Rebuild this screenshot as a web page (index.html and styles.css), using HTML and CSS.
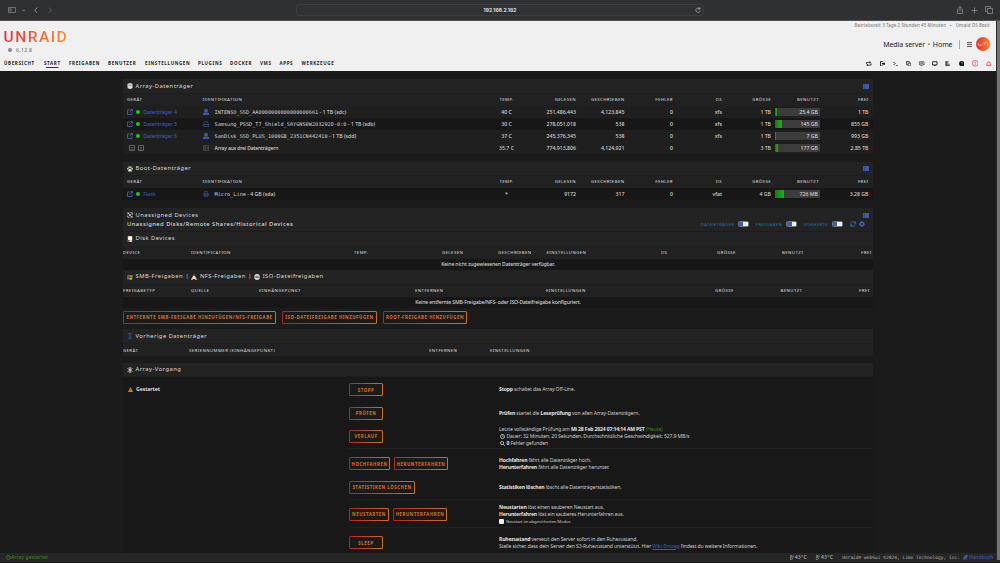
FILE: index.html
```
<!DOCTYPE html>
<html lang="de">
<head>
<meta charset="utf-8">
<title>Media server</title>
<link rel="stylesheet" href="styles.css">
</head>
<body>
<svg class="defs" aria-hidden="true">
  <defs>
    <symbol id="ext" viewBox="0 0 12 12"><path d="M6 2H1v9h9V7M7 1h4v4M11 1L5 7" fill="none" stroke="currentColor" stroke-width="1.900"/></symbol>
    <symbol id="list" viewBox="0 0 12 10"><path d="M0 0h12v10H0z" fill="#3a5ab0"/><path d="M3 0v10" stroke="#26396f" stroke-width=".8"/></symbol>
    <symbol id="drive" viewBox="0 0 12 12"><path d="M3 0h6l1 7H2zM0 8h12v4H0z" fill="currentColor"/></symbol>
    <symbol id="hdd" viewBox="0 0 12 12"><path d="M1 7l2-6h6l2 6v4H1zM1 7h10" fill="none" stroke="currentColor" stroke-width="1.700"/></symbol>
    <symbol id="usb" viewBox="0 0 12 12"><path d="M3 5V1h6v4M1 5h10v4H1zM3 9v2h6V9M1 7h10" fill="none" stroke="currentColor" stroke-width="1.500"/></symbol>
    <symbol id="rack" viewBox="0 0 12 12"><path d="M1 1h10v10H1zM1 4.300h10M1 7.600h10M4 1v10" fill="none" stroke="currentColor" stroke-width="1.300"/></symbol>
    <symbol id="box" viewBox="0 0 12 12"><path d="M1 1h10v10H1z" fill="none" stroke="currentColor" stroke-width="1.600"/><path d="M4 4l2 2 2-2M4 8h4" fill="none" stroke="currentColor" stroke-width="1.400"/></symbol>
    <symbol id="db" viewBox="0 0 12 12"><path d="M1 2.500C1 0 11 0 11 2.500v7C11 12.500 1 12.500 1 9.500z" fill="currentColor"/><path d="M1 3.500c1 1.500 9 1.500 10 0" fill="none" stroke="#555"/></symbol>
    <symbol id="paw" viewBox="0 0 12 12"><g fill="currentColor"><ellipse cx="1.800" cy="5.400" rx="1.500" ry="1.900"/><ellipse cx="4.300" cy="2.400" rx="1.500" ry="2"/><ellipse cx="7.700" cy="2.400" rx="1.500" ry="2"/><ellipse cx="10.200" cy="5.400" rx="1.500" ry="1.900"/><path d="M6 5.400c2 0 3.800 2.600 3.800 4.400 0 2-2.200 1.300-3.800 1.300s-3.800.7-3.800-1.300C2.200 8 4 5.400 6 5.400z"/></g></symbol>
    <symbol id="plug" viewBox="0 0 12 12"><path d="M1 1l10 10M2 5V2h3M7 1.500h3.500V6M1.500 7v3.500H5M7 10h3V8M4 6l2 2M6.500 4L8 5.500" fill="none" stroke="currentColor" stroke-width="1.500"/></symbol>
    <symbol id="disk" viewBox="0 0 12 12"><path d="M1.500 0h9v12h-9z" fill="#c9bd9c"/><circle cx="6.300" cy="5" r="4" fill="#fff"/><path d="M2 8l4 1-3 3H1.500z" fill="#5a4630"/></symbol>
    <symbol id="win" viewBox="0 0 12 12"><path d="M1 2q2.500-1.500 5 0L5 6Q3 5 0 6z" fill="#d8472a"/><path d="M6.500 2q2.500 1 5.500 0l-1 4q-3 1-5.500 0z" fill="#76a82c"/><path d="M0 7q2.500-1 5 0l-1 4q-2-1-4 0z" fill="#4181c9"/><path d="M5.500 7q2.500 1 5.500 0l-1 4q-3 1-5.500 0z" fill="#e5b52b"/></symbol>
    <symbol id="tux" viewBox="0 0 12 12"><ellipse cx="6" cy="3" rx="2" ry="3" fill="#57534c"/><path d="M4 4h4l3 6H1z" fill="#eee6d2"/><path d="M0 9h4v3H0zM8 9h4v3H8zM4.500 3h3L6 4.500z" fill="#dd9a24"/></symbol>
    <symbol id="cd" viewBox="0 0 12 12"><circle cx="6" cy="6" r="5.800" fill="#d5d5d5"/><path d="M6 6L1 3a6 6 0 0 0 0 5zM6 6l5 3a6 6 0 0 0 0-5z" fill="#888"/><circle cx="6" cy="6" r="1.700" fill="#2c2c2c"/></symbol>
    <symbol id="hour" viewBox="0 0 12 12"><path d="M3 1h6M3 11h6M4 1v2l4 6v2M8 1v2L4 9v2" fill="none" stroke="#2b5e9b" stroke-width="1.500"/></symbol>
    <symbol id="snow" viewBox="0 0 12 12"><path d="M6 0v12M1 3l10 6M11 3L1 9M4 1l2 2 2-2M4 11l2-2 2 2" fill="none" stroke="currentColor" stroke-width="1.500"/></symbol>
    <symbol id="warn" viewBox="0 0 12 12"><path d="M6 0l6 12H0z" fill="#d6820c"/><path d="M6 4v4M6 9v1.500" stroke="#8a4a00" stroke-width="1.200"/></symbol>
    <symbol id="clock" viewBox="0 0 12 12"><circle cx="6" cy="6" r="4.800" fill="none" stroke="currentColor" stroke-width="2"/><path d="M6 3v3h2" fill="none" stroke="currentColor" stroke-width="1.400"/></symbol>
    <symbol id="search" viewBox="0 0 12 12"><circle cx="5" cy="5" r="3.800" fill="none" stroke="currentColor" stroke-width="2"/><path d="M8 8l3.500 3.500" stroke="currentColor" stroke-width="2.200"/></symbol>
    <symbol id="sync" viewBox="0 0 12 12"><path d="M1.500 5a4.600 4.600 0 0 1 8.500-1.500M10.500 7A4.600 4.600 0 0 1 2 8.500M11 1v3.500H7.500M1 11V7.500h3.500" fill="none" stroke="currentColor" stroke-width="1.900"/></symbol>
    <symbol id="gear" viewBox="0 0 12 12"><circle cx="6" cy="6" r="3.300" fill="none" stroke="currentColor" stroke-width="2.800"/><path d="M6 0v2M6 10v2M0 6h2M10 6h2M2 2l1 1M9 9l1 1M10 2L9 3M3 9l-1 1" stroke="currentColor" stroke-width="2.200"/></symbol>
    <symbol id="temp" viewBox="0 0 12 12"><path d="M4 7V2a1.500 1.500 0 0 1 3 0v5a2.500 2.500 0 1 1-3 0zM9 2h2M9 4.500h2" fill="none" stroke="currentColor" stroke-width="1.600"/></symbol>
    <symbol id="book" viewBox="0 0 12 12"><path d="M4 0h8l-3 9H2q-1 1 0 1.500h7V12H2Q-1 11 .5 8z" fill="currentColor"/></symbol>
  </defs>
</svg>

<div class="chrome">
  <div class="chrome-left">
    <svg class="c-side" viewBox="0 0 16 12"><path d="M1 1h14v10H1zM6 1v10M2.500 3.500H4.500M2.500 5.500H4.500M2.500 7.500H4.500" fill="none" stroke="#929395" stroke-width="1.300"/></svg>
    <svg class="c-down" viewBox="0 0 8 6"><path d="M1 1l3 3 3-3" fill="none" stroke="#aaa" stroke-width="1.800"/></svg>
    <svg class="c-back" viewBox="0 0 6 10"><path d="M5 1L1 5l4 4" fill="none" stroke="#aaa" stroke-width="1.300"/></svg>
    <svg class="c-back" viewBox="0 0 6 10"><path d="M1 1l4 4-4 4" fill="none" stroke="#606163" stroke-width="1.300"/></svg>
  </div>
  <div class="address"><span>192.168.2.162</span>
    <svg viewBox="0 0 12 12"><path d="M9.500 3.500A4.400 4.400 0 1 0 10.500 7M6.500 4h3.500V.5" fill="none" stroke="#b5b5b5" stroke-width="1.500"/></svg>
  </div>
  <div class="chrome-right">
    <svg viewBox="0 0 14 16"><path d="M4.500 6H2v9h10V6H9.500M7 11V1M4 4l3-3 3 3" fill="none" stroke="#929395" stroke-width="1.500"/></svg>
    <svg viewBox="0 0 14 14"><path d="M7 1v12M1 7h12" fill="none" stroke="#929395" stroke-width="1.500"/></svg>
    <svg viewBox="0 0 16 16"><path d="M4 11H1V1h10v3M5 5h10v10H5z" fill="none" stroke="#929395" stroke-width="1.500"/></svg>
  </div>
</div>

<header class="header">
  <div class="brand">
    <div class="logo">UNRAID</div>
    <div class="version"><i></i>6.12.8</div>
  </div>
  <div class="server">
    <div class="uptime"><span>Betriebszeit 3 Tage 2 Stunden 45 Minuten</span><b>•</b><span>Unraid OS <em>Basic</em></span></div>
    <div class="name"><span>Media server</span><b>•</b><span>Home</span><i class="bar"></i><i class="burger"></i>
      <svg class="avatar" viewBox="0 0 14 14"><defs><linearGradient id="g"><stop stop-color="#e2302b"/><stop offset="1" stop-color="#ff8229"/></linearGradient></defs><circle cx="7" cy="7" r="7" fill="url(#g)"/><path d="M2.200 6v1q0 1.600 1.400 1.600T5 7M6.300 8.800V8M7.300 6.500V5.500M8.600 8V6.500q0-1.400 1.400-1.400T11.500 6.500V9" fill="none" stroke="#f6d6c8" stroke-width=".8"/></svg>
    </div>
  </div>
  <nav class="nav">
    <a>ÜBERSICHT</a><a class="active">START</a><a>FREIGABEN</a><a>BENUTZER</a><a>EINSTELLUNGEN</a><a>PLUGINS</a><a>DOCKER</a><a>VMS</a><a>APPS</a><a>WERKZEUGE</a>
  </nav>
  <div class="tools">
    <svg viewBox="0 0 12 12"><path d="M1 7V3h9M11 5v4H2M7.500 1.500L10 3 7.500 5M4.500 7L2 9l2.500 2" fill="none" stroke="#222" stroke-width="1.800"/></svg>
    <svg viewBox="0 0 12 12"><path d="M6 1H1v10h5" fill="none" stroke="#222" stroke-width="2"/><path d="M4 4.500h4V2l4 4-4 4V7.500H4z" fill="#222"/></svg>
    <svg viewBox="0 0 12 12"><path d="M1 2l3.500 3.500L1 9M6 10.500h6" fill="none" stroke="#222" stroke-width="2"/></svg>
    <svg viewBox="0 0 12 12"><path d="M4 8H1V1h6v3M4.500 4.500h6v6.500h-6z" fill="none" stroke="#222" stroke-width="1.700"/></svg>
    <svg viewBox="0 0 12 12"><path d="M1 1.500h10v7H7l-2 2v-2H1zM3 4h6M3 6h6" fill="none" stroke="#222" stroke-width="1.300"/></svg>
    <svg viewBox="0 0 12 12"><path d="M1 1.500h10v7H1z" fill="none" stroke="#222" stroke-width="2"/><path d="M4 9h4v2.500H4z" fill="#222"/></svg>
    <svg viewBox="0 0 12 12"><path d="M2 0v12M2 2h6M2 4.500h4M2 7h8M2 10h9" fill="none" stroke="#222" stroke-width="1.800"/></svg>
    <svg viewBox="0 0 12 12"><circle cx="6" cy="6" r="5.800" fill="#111"/><path d="M4.300 4.500q0-1.700 1.700-1.700t1.700 1.500Q7.700 5.500 6 6.500M6 8v1.500" fill="none" stroke="#ddd" stroke-width="1"/></svg>
    <svg class="big" viewBox="0 0 12 12"><circle cx="6" cy="6" r="5.300" fill="none" stroke="#e2415c" stroke-width="1.400"/><path d="M6 3v3.500M6 7.500V9" stroke="#e2415c" stroke-width="1.600"/></svg>
    <svg viewBox="0 0 12 12"><path d="M1 9.500q1.500-1 1.500-4Q2.500 2 6 2t3.500 3.500q0 3 1.500 4z" fill="none" stroke="#ff4a22" stroke-width="2"/><path d="M5 11h2" stroke="#ff4a22" stroke-width="1.800"/></svg>
  </div>
</header>
<div class="scrollbar"></div>

<main class="content">
  <section class="array">
    <h2><svg><use href="#db"/></svg><span>Array-Datenträger</span><svg class="view"><use href="#list"/></svg></h2>
    <div class="row head"><span>GERÄT</span><span>IDENTIFIKATION</span><span>TEMP.</span><span>GELESEN</span><span>GESCHRIEBEN</span><span>FEHLER</span><span>DS</span><span>GRÖSSE</span><span>BENUTZT</span><span>FREI</span></div>
    <div class="row"><span class="dev"><svg><use href="#ext"/></svg><i></i>Datenträger 4</span><span class="id"><svg class="blue"><use href="#drive"/></svg><tt>INTENSO_SSD_AA0000000000000000661</tt> - 1 TB (sdc)</span><span>40 C</span><span>251,486,443</span><span>4,123,845</span><span>0</span><span>xfs</span><span>1 TB</span><span class="use"><i style="width:4%"></i>25.4 GB</span><span>1 TB</span></div>
    <div class="row dark"><span class="dev"><svg><use href="#ext"/></svg><i></i>Datenträger 5</span><span class="id"><svg class="navy"><use href="#hdd"/></svg><tt>Samsung_PSSD_T7_Shield_S6YGNS0W203292D-0:0</tt> - 1 TB (sdb)</span><span>30 C</span><span>278,051,018</span><span>538</span><span>0</span><span>xfs</span><span>1 TB</span><span class="use"><i style="width:15%"></i>145 GB</span><span>855 GB</span></div>
    <div class="row"><span class="dev"><svg><use href="#ext"/></svg><i></i>Datenträger 6</span><span class="id"><svg class="blue"><use href="#drive"/></svg><tt>SanDisk_SSD_PLUS_1000GB_2351CN442410</tt> - 1 TB (sdd)</span><span>37 C</span><span>245,376,345</span><span>538</span><span>0</span><span>xfs</span><span>1 TB</span><span class="use"><i style="width:2%"></i>7 GB</span><span>993 GB</span></div>
    <div class="row total"><span class="dev grey"><svg><use href="#box"/></svg><svg><use href="#box"/></svg></span><span class="id"><svg class="grey"><use href="#rack"/></svg>Array aus drei Datenträgern</span><span>35.7 C</span><span>774,913,806</span><span>4,124,921</span><span>0</span><span></span><span>3 TB</span><span class="use"><i style="width:6.500%"></i>177 GB</span><span>2.85 TB</span></div>
  </section>

  <section class="boot">
    <h2><svg><use href="#paw"/></svg><span>Boot-Datenträger</span><svg class="view"><use href="#list"/></svg></h2>
    <div class="row head"><span>GERÄT</span><span>IDENTIFIKATION</span><span>TEMP.</span><span>GELESEN</span><span>GESCHRIEBEN</span><span>FEHLER</span><span>DS</span><span>GRÖSSE</span><span>BENUTZT</span><span>FREI</span></div>
    <div class="row dark"><span class="dev"><svg><use href="#ext"/></svg><i></i>Flash</span><span class="id"><svg class="navy"><use href="#usb"/></svg><tt>Micro_Line</tt> - 4 GB (sda)</span><span>*</span><span>9172</span><span>317</span><span>0</span><span>vfat</span><span>4 GB</span><span class="use"><i style="width:19%"></i>726 MB</span><span>3.28 GB</span></div>
  </section>

  <section class="unassigned">
    <div class="ud-title">
      <h2><svg><use href="#plug"/></svg><span>Unassigned Devices</span><svg class="view"><use href="#list"/></svg></h2>
      <div class="ud-sub"><span class="sub">Unassigned Disks/Remote Shares/Historical Devices</span>
        <div class="switches"><span>DATENTRÄGER</span><i></i><span>FREIGABEN</span><i></i><span>VORHERIG</span><i></i><svg><use href="#sync"/></svg><svg><use href="#gear"/></svg></div>
      </div>
    </div>
    <h2 class="split"><svg><use href="#disk"/></svg><span>Disk Devices</span></h2>
    <div class="heads disks"><span>DEVICE</span><span>IDENTIFICATION</span><span>TEMP.</span><span>GELESEN</span><span>GESCHRIEBEN</span><span>EINSTELLUNGEN</span><span>DS</span><span>GRÖSSE</span><span>BENUTZT</span><span>FREI</span></div>
    <div class="empty">Keine nicht zugewiesenen Datenträger verfügbar.</div>
    <h2 class="shares"><svg><use href="#win"/></svg><span>SMB-Freigaben</span><b>|</b><svg><use href="#tux"/></svg><span>NFS-Freigaben</span><b>|</b><svg><use href="#cd"/></svg><span>ISO-Dateifreigaben</span></h2>
    <div class="heads smb"><span>FREIGABETYP</span><span>QUELLE</span><span>EINHÄNGEPUNKT</span><span>ENTFERNEN</span><span>EINSTELLUNGEN</span><span>GRÖSSE</span><span>BENUTZT</span><span>FREI</span></div>
    <div class="empty last">Keine entfernte SMB-Freigabe/NFS- oder ISO-Dateifreigabe konfiguriert.</div>
    <div class="actions"><button class="b-smb">ENTFERNTE SMB-FREIGABE HINZUFÜGEN/NFS-FREIGABE</button><button class="b-iso">ISO-DATEIFREIGABE HINZUFÜGEN</button><button class="b-root">ROOT-FREIGABE HINZUFÜGEN</button></div>
    <h2><svg><use href="#hour"/></svg><span>Vorherige Datenträger</span></h2>
    <div class="heads prev"><span>GERÄT</span><span>SERIENNUMMER (EINHÄNGEPUNKT)</span><span>ENTFERNEN</span><span>EINSTELLUNGEN</span></div>
  </section>

  <section class="operation">
    <h2><svg><use href="#snow"/></svg><span>Array-Vorgang</span></h2>
    <div class="ops">
      <div class="state"><svg><use href="#warn"/></svg><b>Gestartet</b></div>
      <div class="op-list">
        <div class="op o1"><div><button>STOPP</button></div><p><b>Stopp</b> schaltet das Array Off-Line.</p></div>
        <div class="op o2"><div><button>PRÜFEN</button></div><p><b>Prüfen</b> startet die <b>Leseprüfung</b> von allen Array-Datenträgern.</p></div>
        <div class="op o3"><div><button>VERLAUF</button></div><p>Letzte vollständige Prüfung am <b>Mi 28 Feb 2024 07:14:14 AM PST</b> <span class="green">(Heute)</span><br><svg><use href="#clock"/></svg>Dauer: 32 Minuten, 20 Sekunden. Durchschnittliche Geschwindigkeit: 527.9 MB/s<br><svg><use href="#search"/></svg><b>0</b> Fehler gefunden</p></div>
        <div class="op o4"><div><button class="w41">HOCHFAHREN</button><button class="w54">HERUNTERFAHREN</button></div><p><b>Hochfahren</b> fährt alle Datenträger hoch.<br><b>Herunterfahren</b> fährt alle Datenträger herunter.</p></div>
        <div class="op o5"><div><button class="w66">STATISTIKEN LÖSCHEN</button></div><p><b>Statistiken löschen</b> löscht alle Datenträgerstatistiken.</p></div>
        <div class="op o6"><div><button class="w40">NEUSTARTEN</button><button class="w54">HERUNTERFAHREN</button></div><p><b>Neustarten</b> löst einen sauberen Neustart aus.<br><b>Herunterfahren</b> löst ein sauberes Herunterfahren aus.<br><i class="check"></i><small>Neustart im abgesicherten Modus</small></p></div>
        <div class="op o7"><div><button>SLEEP</button></div><p><b>Ruhezustand</b> versetzt den Server sofort in den Ruhezustand.<br>Stelle sicher, dass dein Server den S3-Ruhezustand unterstützt. Hier <a>Wiki-Eintrag</a> findest du weitere Informationen.</p></div>
      </div>
    </div>
  </section>
</main>

<footer class="footer">
  <div class="f-state"><svg><use href="#clock"/></svg>Array gestartet</div>
  <div class="f-right"><span class="t1"><svg><use href="#temp"/></svg>43°C</span><span class="t2"><svg><use href="#temp"/></svg>43°C</span><span class="copy">Unraid® webGui ©2024, Lime Technology, Inc.</span><span class="manual"><svg><use href="#book"/></svg>Handbuch</span></div>
</footer>
</body>
</html>
```
FILE: styles.css
```
* { box-sizing: border-box; }
html { background: #1b1b1b; }
body { margin: 0; width: 1000px; height: 563px; overflow: hidden; display: flex; flex-direction: column; position: relative; background: #1b1b1b; color: #d4d4d4; font: 500 5.200px/7px "Noto Sans", sans-serif; white-space: nowrap; }
.defs { position: absolute; width: 0; height: 0; }
svg { display: block; flex: none; width: 6px; height: 6px; }
h2, p { margin: 0; font-weight: 400; }

/* browser bar */
.chrome { flex: none; height: 21px; display: grid; grid-template-columns: 296px 408px 1fr; align-items: center; background: #2f3032; border-bottom: 1px solid #505153; }
.chrome-left { display: flex; align-items: center; padding-left: 8px; }
.c-side { width: 8px; height: 6px; }
.c-down { width: 3.500px; height: 3px; margin-left: 5.500px; }
.c-back { width: 4px; height: 6.500px; margin-left: 9.500px; }
.c-down + .c-back { margin-left: 9px; }
.address { height: 11.500px; border: 1px solid #3c3d3f; border-radius: 4px; display: grid; grid-template-columns: 1fr 9px; align-items: center; color: #eee; font: 600 5.100px/9px Inter, sans-serif; text-align: center; }
.address span { padding-left: 9px; }
.address svg { width: 6px; height: 6px; margin-left: 1px; }
.chrome-right { display: flex; align-items: center; justify-content: flex-end; gap: 7px; padding-right: 7px; }
.chrome-right svg { width: 8px; height: 8px; }
.chrome-right svg:nth-child(2) { width: 7px; height: 7px; }

/* page header */
.header { flex: none; width: 996px; height: 50px; display: grid; grid-template-columns: 1fr 200px; grid-template-rows: 35px 15px; background: #f0f0f0; color: #222; }
.brand { padding: 8px 0 0 3.500px; }
.logo { width: max-content; font: 500 15.500px/17px Roboto, sans-serif; letter-spacing: 1.500px; color: transparent; background: linear-gradient(90deg, #e0303a, #ff8c35); -webkit-background-clip: text; background-clip: text; }
.version { display: flex; align-items: center; gap: 4px; padding-left: 4px; color: #777; letter-spacing: .350px; line-height: 8px; font-size: 5px; }
.version i { width: 4.500px; height: 4.500px; border-radius: 50%; background: #888; }
.server { display: flex; flex-direction: column; align-items: flex-end; padding-right: 6px; }
.uptime { display: flex; gap: 4px; margin-top: 1px; color: #808080; font-size: 4.400px; letter-spacing: .110px; }
.uptime b { font-size: 4px; }
.name { display: flex; align-items: center; height: 14px; margin-top: 8px; font-size: 7px; font-weight: 400; letter-spacing: -.070px; color: #222; }
.name b { margin: 0 3px; font-size: 5px; color: #555; }
.bar { width: 1px; height: 9px; margin: 0 7px 0 6px; background: #aaa; }
.burger { width: 5.500px; height: 5px; border: solid #555; border-width: 1px 0; background: linear-gradient(#555, #555) center/100% 1px no-repeat; margin-right: 4px; }
.avatar { width: 14px; height: 14px; }
.nav { display: grid; grid-template-columns: 40px 25px 39px 37px 53px 32px 30px 19.500px 22px 40px; padding-left: 4px; align-items: center; height: 15px; font-size: 4.500px; font-weight: bold; letter-spacing: .640px; color: #1c1c1c; }
.nav a { height: 9px; line-height: 9px; justify-self: start; }
.nav .active { background: linear-gradient(#333, #333) 2px 8px/12.500px 1px no-repeat; }
.tools { display: flex; justify-content: flex-end; align-items: center; gap: 7.700px; padding-right: 4.500px; height: 15px; }
.tools svg { width: 5.500px; height: 5.500px; }
.tools .big { width: 6.500px; height: 6.500px; }
.scrollbar { position: absolute; right: 0; top: 21px; width: 4px; height: 539px; background: #737373; border-left: 1px solid #2a2a2a; }

/* tables */
.content { flex: none; height: 482px; width: 750px; margin-left: 123px; padding-top: 8px; display: flex; flex-direction: column; overflow: hidden; }
.content section { flex: none; }
.array { height: 83px; }
.boot { height: 46px; }
.unassigned { height: 155px; }
h2 { height: 15px; display: flex; align-items: center; padding: 0 4px; background: #232323; color: #dcdcdc; font-size: 5.800px; letter-spacing: .480px; border-bottom: 1px solid #1e1e1e; }
h2 span { padding-left: 2.500px; }
h2 .view { width: 6px; height: 5px; margin-left: auto; }
.boot h2 { height: 14px; }
.row { height: 12px; display: grid; grid-template-columns: 75.500px 279.500px 49px 45px 48.500px 48.500px 49px 49px 49px 48.500px; padding-left: 4px; align-items: center; background: #1f1f1f; }
.row > span { text-align: right; }
.row > span:nth-child(-n+2) { text-align: left; }
.row > span:nth-child(3) { text-align: center; }
.row.head { background: #212121; }
.head, .heads { color: #c8c8c8; font-size: 4.300px; letter-spacing: .420px; }
.row.head > span { position: relative; top: -.5px; }
.head > span:nth-child(9) { padding-right: 1px; }
.row.dark { background: #171717; }
.row .dev, .row .id { display: flex; align-items: center; color: #3a5ab0; }
.dev i { width: 4px; height: 4px; margin: 0 3px 0 3.300px; border-radius: 50%; background: #1fc71f; }
.dev { letter-spacing: -.090px; }
.row .dev.grey { padding-left: 2px; gap: 3px; color: #777; }
.row .id { color: #d4d4d4; white-space: pre; }
.row .id svg { margin-right: 5.500px; margin-left: .5px; }
.blue { color: #3a5ab0; }
.navy { color: #304a90; }
.id .grey { color: #555; }
.row.total .id { font-size: 5.100px; letter-spacing: -.170px; }
tt { font: 5.220px/7px "DejaVu Sans Mono", monospace; letter-spacing: 0; }
.use { justify-self: end; width: 45px; height: 8px; line-height: 8px; background: #3c3c3c; display: flex; justify-content: flex-end; padding-right: 2px; position: relative; }
.use i { position: absolute; left: 0; top: 0; height: 100%; background: linear-gradient(90deg, #127a12, #1ab51a); }

/* unassigned devices */
.ud-title { height: 24px; padding-top: 2.500px; background: #232323; border-bottom: 1px solid #1c1c1c; }
.ud-title h2 { height: 9px; border: 0; }
.ud-sub { display: flex; justify-content: space-between; align-items: center; height: 9px; padding: 0 8px 0 4px; font-size: 5.800px; letter-spacing: .460px; color: #dcdcdc; }
.switches { display: flex; align-items: center; color: #1f6f98; font-size: 4.200px; letter-spacing: .400px; }
.switches i { width: 11px; height: 5.500px; margin: 0 7px 0 3.500px; border-radius: 1.500px; background: linear-gradient(90deg, #3d5fb5 50%, #eee 50%); border: .5px solid #777; }
.switches svg { color: #3d5fb5; margin-right: 3.500px; }
.switches svg:last-child { margin-right: 0; }
h2.split, h2.shares { height: 14.500px; }
.shares b { font-weight: normal; margin: 0 2.300px 0 2.300px; }
.heads { height: 12px; display: grid; align-items: center; background: #212121; }
.disks { grid-template-columns: 68px 163px 88px 56px 48.500px 114.500px 56px 65px 79px 1fr; }
.smb { grid-template-columns: 68px 68px 156px 131px 169px 65.500px 78.500px 1fr; }
.prev { grid-template-columns: 66px 240px 61px 1fr; line-height: 10px; height: 11.500px; }
.empty { height: 11.500px; line-height: 10.500px; text-align: center; background: #171717; font-size: 5.100px; letter-spacing: -.150px; }
.empty.last { height: 11px; letter-spacing: -.140px; }
.actions { height: 21.500px; padding-top: 3px; display: flex; gap: 6px; }
button { width: 34px; height: 13px; padding: 0; border: 1px solid transparent; border-radius: 1.500px; background: linear-gradient(#1a1a1a, #1a1a1a) padding-box, linear-gradient(90deg, #b02423, #cf7020) border-box; color: #e0701e; font: bold 4.300px/10px "Noto Sans", sans-serif; letter-spacing: .600px; text-align: center; white-space: nowrap; }
.b-smb { width: 153px; }
.b-iso { width: 95px; }
.b-root { width: 84px; }

/* array operation */
.operation h2 { height: 14px; }
.ops { display: grid; grid-template-columns: 226px 1fr; height: 176px; background: #181818; color: #cdcdcd; }
.state { display: flex; align-items: center; gap: 3px; height: 25px; padding-left: 5px; color: #ddd; letter-spacing: -.1px; }
.state svg { width: 5px; height: 5px; }
.op { display: grid; grid-template-columns: 150px 1fr; align-items: center; }
.op > div { display: flex; gap: 4px; }
.op p { line-height: 7px; font-size: 5.100px; letter-spacing: -.130px; }
.op b { color: #e2e2e2; letter-spacing: -.160px; }
.op p svg { display: inline-block; vertical-align: -1px; margin: 0 2px 0 .5px; width: 5px; height: 5px; }
.o1 { height: 25px; }
.o2 { height: 21.500px; padding-top: 1px; }
.o3 { height: 25.500px; padding-top: 1px; border-bottom: 1px solid #202020; }
.o4 { height: 29px; }
.o5 { height: 21.500px; padding-bottom: 2px; border-bottom: 1px solid #202020; }
.o6 { height: 28.500px; padding-top: 2px; border-bottom: 1px solid #202020; }
.o7 { height: 25px; padding-top: 4px; }
.w40 { width: 40px; }
.w41 { width: 41px; }
.w54 { width: 54px; }
.w66 { width: 66px; }
.green { color: #3f8a12; }
.op a { color: #3d5fb5; text-decoration: underline; }
.check { display: inline-block; width: 5px; height: 5px; margin-right: 2px; vertical-align: -1px; border-radius: 1px; background: #eee; }
small { font-size: 4.200px; letter-spacing: -.090px; }

/* footer */
.footer { flex: none; height: 10px; display: flex; justify-content: space-between; align-items: center; padding: 0 7px 0 5.500px; background: #262626; color: #b5b5b5; font-size: 5px; border-bottom: 1px solid #141414; }
.f-state, .f-right, .f-right span { display: flex; align-items: center; }
.f-state { color: #3b7f10; gap: .5px; letter-spacing: .060px; }
.footer svg { width: 5px; height: 5px; }
.f-right span { gap: 1px; letter-spacing: .300px; }
.f-right .t2 { margin-left: 8px; }
.f-right .copy { margin-left: 9px; font: 4.560px/7px "DejaVu Sans Mono", monospace; letter-spacing: 0; }
.f-right .manual { margin-left: 3px; color: #3a5ab0; letter-spacing: -.070px; }
```
